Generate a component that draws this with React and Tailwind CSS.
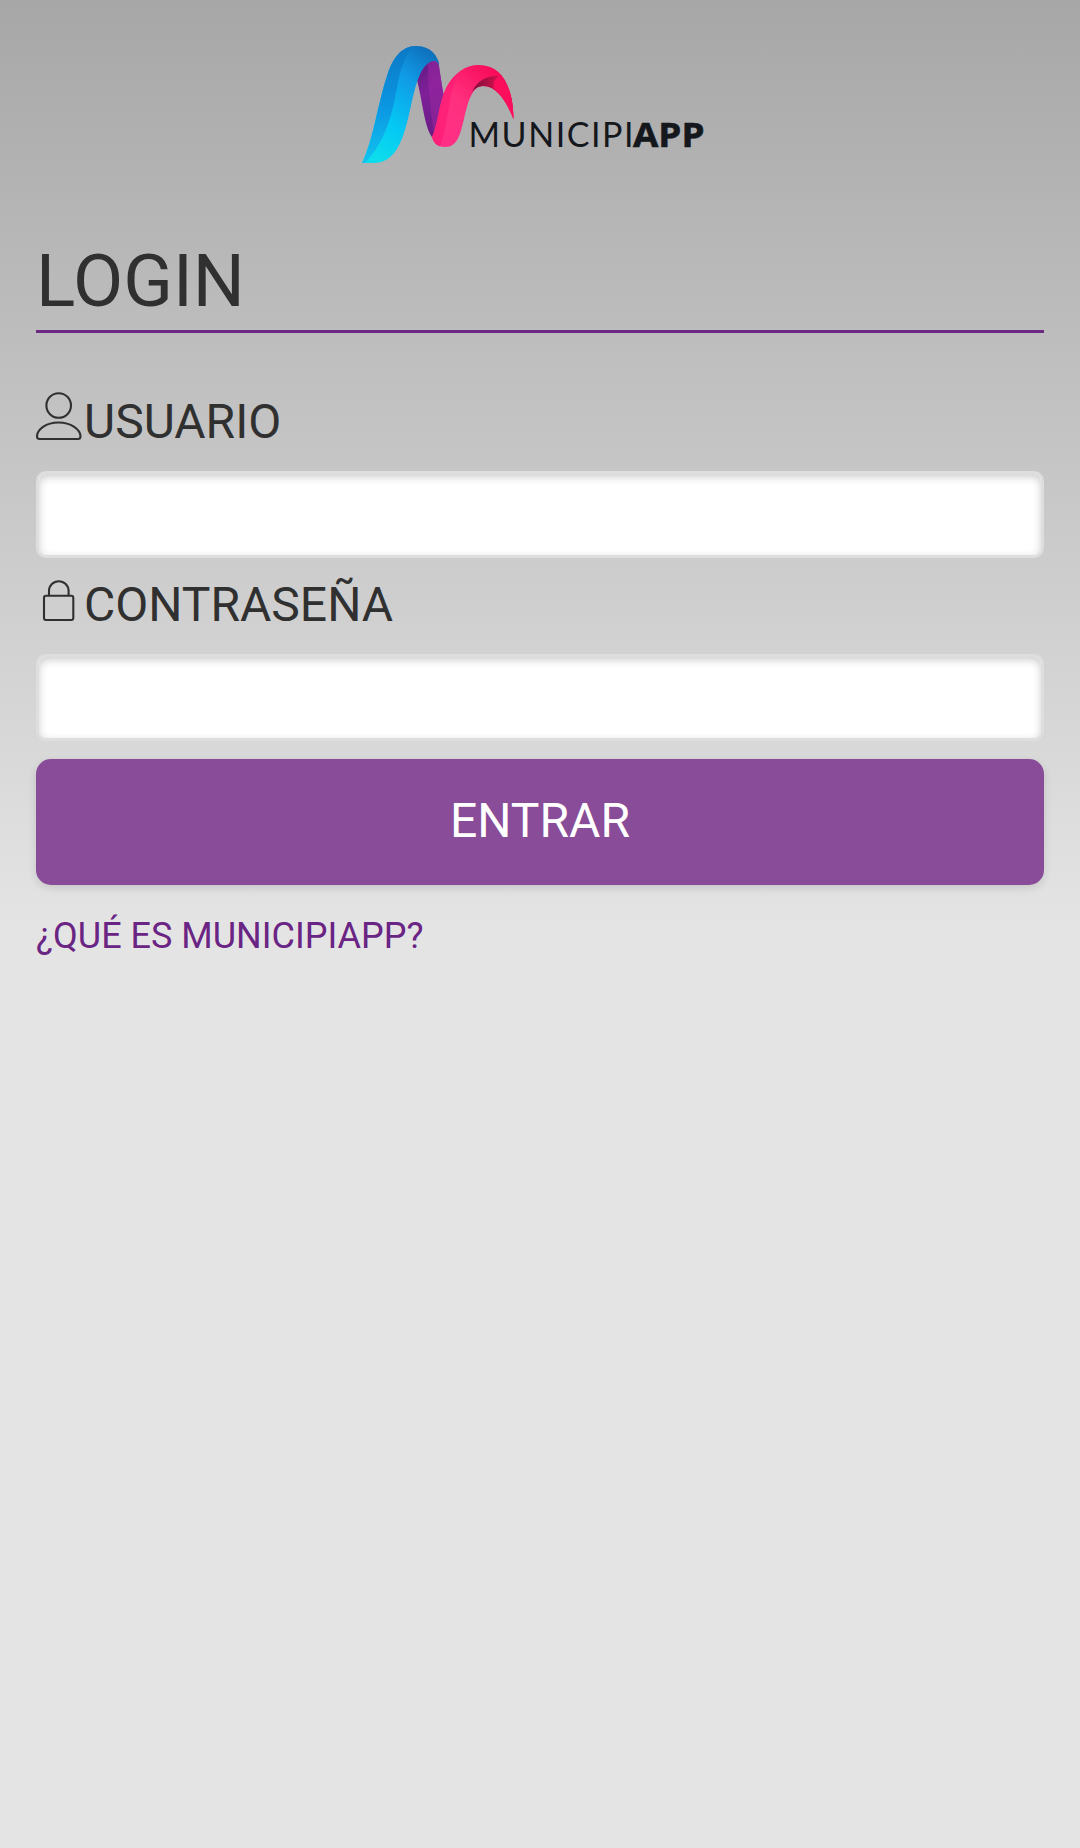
function Logo() {
  return (
    <svg
      viewBox="350 30 380 145"
      className="block w-[380px] h-[145px]"
      role="img"
      aria-label="Municipiapp"
    >
      <defs>
        <linearGradient id="blueDark" x1="0" y1="0" x2="0" y2="1">
          <stop offset="0" stopColor="#0c78c4" />
          <stop offset="0.5" stopColor="#0a95e2" />
          <stop offset="1" stopColor="#12c4ee" />
        </linearGradient>
        <linearGradient id="blueLight" x1="0.8" y1="0" x2="0.3" y2="1">
          <stop offset="0" stopColor="#0e70bc" />
          <stop offset="0.3" stopColor="#109ae6" />
          <stop offset="0.7" stopColor="#04c8f4" />
          <stop offset="1" stopColor="#0cdcec" />
        </linearGradient>
        <linearGradient id="purple" x1="0" y1="0" x2="0.3" y2="1">
          <stop offset="0" stopColor="#561a78" />
          <stop offset="0.5" stopColor="#80209a" />
          <stop offset="1" stopColor="#6a1c86" />
        </linearGradient>
        <linearGradient id="pink" x1="0.2" y1="1" x2="0.9" y2="0.2">
          <stop offset="0" stopColor="#ff2f86" />
          <stop offset="0.5" stopColor="#ff2f7e" />
          <stop offset="1" stopColor="#f80c5a" />
        </linearGradient>
        <linearGradient id="fold" x1="0" y1="0" x2="1" y2="0">
          <stop offset="0" stopColor="#7c0c3c" />
          <stop offset="0.5" stopColor="#c01048" />
          <stop offset="1" stopColor="#ee105a" />
        </linearGradient>
      </defs>

      {/* purple back strip */}
      <path d="M417.5 82 L414 70 L427 56 L438 60 C440 72 442 86 443.5 94 L446 92 L440 116 L434 139 C425 132 423 104 417.5 82Z" fill="url(#purple)" />
      <path d="M428 58 L438 60 C440 72 442 86 443.5 94 L446 92 L440 114 L434 134 C431 112 427 84 428 58Z" fill="#9826a0" opacity="0.6" />

      {/* blue ribbon */}
      <path d="M362 163 C373 141 378 103 387 76 C393 57 402 46 416 46 C430 46 438 54 439.5 67 C438 61 434 60 430 62 C423 66 420 74 417 82 C407 113 406 163 374 163Z" fill="url(#blueLight)" />
      <path d="M362 163 C373 141 378 103 387 76 C393 57 402 46 416 46 C403 53 399 76 395 98 C390 125 380 147 365 163Z" fill="url(#blueDark)" />

      {/* pink ribbon */}
      <path d="M432 137 C438 125 439 102 446 88 C454 73 465 65 479 65 C500 65 513 83 513.5 119 C507 103 498 86 483 86 C472 86 468 102 464 119 C460 134 458 147 445 147 C438 147 434 144 432 137Z" fill="url(#pink)" />
      <path d="M432 137 C438 125 439 102 446 88 C449 82 453 77 458 73 C448 92 448 129 440 146 C436 145 433 142 432 137Z" fill="#ff1a74" opacity="0.7" />
      <path d="M472 92 C477 80 488 75 499 76 C510 86 513 99 513.5 119 C507 103 498 86 483 86 C479 86 475 88 472 92Z" fill="url(#fold)" />
      <path d="M499 76 C510 86 513 99 513.5 119 C509 107 503 97 496 91 C492 87 492 80 499 76Z" fill="#fb0e5c" />

      <text x="468.5" y="147" textLength="165" className="font-['Lato',sans-serif] text-[34px]" fill="#14171c">
        MUNICIPI
      </text>
      <text x="633" y="147" textLength="71.5" lengthAdjust="spacingAndGlyphs" className="font-['Open_Sans',sans-serif] text-[34px] font-bold" fill="#14171c" stroke="#14171c" strokeWidth="0.6">
        APP
      </text>
    </svg>
  )
}

function UserIcon() {
  return (
    <svg viewBox="0 0 48 60" className="w-12 h-[60px] shrink-0" fill="none" stroke="#303030" strokeWidth="2.1">
      <circle cx="22.7" cy="13.5" r="12.3" />
      <path d="M22.5 30.5 C10 30.5 1 37.5 1 44.5 Q1 47 3.5 47 H42 Q44.5 47 44.5 44.5 C44.5 37.5 35 30.5 22.5 30.5Z" />
    </svg>
  )
}

function LockIcon() {
  return (
    <svg viewBox="0 0 48 60" className="w-12 h-[60px] shrink-0" fill="none" stroke="#303030" strokeWidth="2.1">
      <path d="M13 20.5 V16 A9.8 9.8 0 0 1 32.6 16 V20.5" />
      <rect x="8" y="20.7" width="29.3" height="24.3" rx="2" />
    </svg>
  )
}

function Field({ id, type, label, icon }) {
  return (
    <div>
      <label htmlFor={id} className="flex h-[60px] text-5xl leading-[60px]">
        {icon}
        <span>{label}</span>
      </label>
      <input
        id={id}
        type={type}
        className="mt-[19px] block w-full h-[87px] rounded-[10px] border-3 border-[#dedede] bg-white px-4 text-5xl outline-none shadow-[inset_0_3px_9px_rgba(0,0,0,0.2)]"
      />
    </div>
  )
}

export default function App() {
  return (
    <div className="min-h-[1848px] bg-[#e4e4e4] bg-[linear-gradient(#a7a7a7,#e4e4e4_924px)] px-9 font-['Roboto',sans-serif] text-[#303030]">
      <header className="flex h-[236px] pt-[30px] pl-[314px]">
        <Logo />
      </header>

      <h1 className="border-b-3 border-[#6c2a84] pb-1 text-[73px] leading-[90px]">LOGIN</h1>

      <form className="pt-[59px]" onSubmit={(e) => e.preventDefault()}>
        <div className="flex flex-col gap-[17px]">
          <Field id="usuario" type="text" label="USUARIO" icon={<UserIcon />} />
          <Field id="contrasena" type="password" label="CONTRASEÑA" icon={<LockIcon />} />
        </div>
        <button
          type="submit"
          className="mt-[18px] block h-[126px] w-full rounded-[15px] bg-[#884c98] pb-0.5 text-5xl text-white shadow-[0_3px_9px_rgba(0,0,0,0.12)]"
        >
          ENTRAR
        </button>
      </form>

      <a href="#" className="mt-[26px] block text-4xl leading-[50px] text-[#6a2484]">
        ¿QUÉ ES MUNICIPIAPP?
      </a>
    </div>
  )
}
